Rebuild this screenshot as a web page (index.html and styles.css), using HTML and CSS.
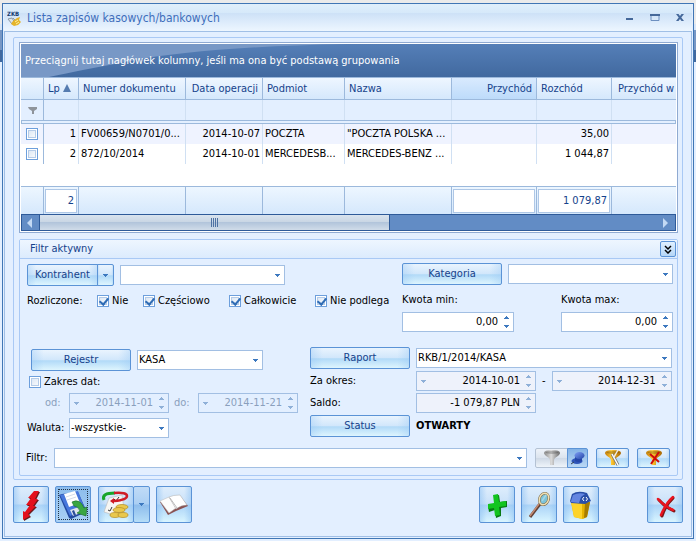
FILE: index.html
```html
<!DOCTYPE html>
<html lang="pl">
<head>
    <meta charset="utf-8">
    <title>Lista zapisów kasowych/bankowych</title>
    <link rel="stylesheet" href="styles.css">
</head>
<body>
    <svg class="defs" width="0" height="0">
        <defs>
            <linearGradient id="gold" x1="0" x2="1"><stop offset="0" stop-color="#c07a08"/><stop offset=".4" stop-color="#ffc933"/><stop offset="1" stop-color="#a86400"/></linearGradient>
            <linearGradient id="steel" x1="0" x2="1"><stop offset="0" stop-color="#8b8b8b"/><stop offset=".45" stop-color="#dcdcdc"/><stop offset="1" stop-color="#6d6d6d"/></linearGradient>
            <linearGradient id="blue" x1="0" x2="1" y2="1"><stop offset="0" stop-color="#7f9ff5"/><stop offset="1" stop-color="#2446a8"/></linearGradient>
        </defs>
        <symbol id="drop" viewBox="0 0 5 3"><path d="M0 0h5v1H4v1H3v1H2V2H1V1H0z" fill="currentColor"/></symbol>
        <symbol id="updown" viewBox="0 0 5 12"><path d="M2 0h1v1h1v1h1v1H0V2h1V1h1zM0 9h5v1H4v1H3v1H2v-1H1v-1H0z" fill="currentColor"/></symbol>
        <symbol id="funnel" viewBox="0 0 18 18"><path d="M1 4q0-3 8-3t8 3q0 2-5 5-1 1-1 3v4H7v-4q0-2-1-3-5-3-5-5z"/><ellipse cx="9" cy="3.500" rx="6.500" ry="1.500" fill="#0003"/></symbol>
    </svg>

    <div class="window">
        <header class="titlebar">
            <svg class="app-icon" width="15" height="16" viewBox="0 0 15 16">
                <text x="0" y="6" font-size="6" font-weight="bold" fill="#173c70">ZKB</text>
                <path d="M1 9l4 5 3-1-3-5zM6 8l2 2" stroke="#8b99a6" fill="#dde3e8"/>
                <path d="M6 11l4-3 3-1-1 3 2 2-3 3-4 1-3-2z" fill="#e5b429"/>
                <path d="M8 12l3-2M9 14l3-2" stroke="#fff0a0"/>
            </svg>
            <h1>Lista zapisów kasowych/bankowych</h1>
            <button class="sys" aria-label="Minimalizuj"><svg width="10" height="9"><path d="M1 5h7v2H1z" fill="#45689a"/></svg></button>
            <button class="sys" aria-label="Maksymalizuj"><svg width="10" height="9"><path d="M1 1.500h8v6H1z" fill="none" stroke="#6d8fc0"/><path d="M0 1h10v2H0z" fill="#45689a"/></svg></button>
            <button class="sys" aria-label="Zamknij"><svg width="10" height="9"><path d="M1 1h2.500L5 3l1.500-2H9L6.300 4.500 9 8H6.500L5 6 3.500 8H1l2.700-3.500z" fill="#45689a"/></svg></button>
        </header>

        <main class="content">
            <div class="panel">
                <div class="grid">
                    <div class="group-bar">
                        <svg width="326" height="33" viewBox="0 0 326 33"><path d="M0 0H326Q180 3 110 17 60 26 28 33H0z" fill="#7898c6"/></svg>
                        <span>Przeciągnij tutaj nagłówek kolumny, jeśli ma ona być podstawą grupowania</span>
                    </div>
                    <table>
                        <colgroup>
                            <col class="c-mark"><col class="c-lp"><col class="c-doc"><col class="c-date"><col class="c-party"><col class="c-name"><col class="c-in"><col class="c-out"><col>
                        </colgroup>
                        <thead>
                            <tr class="head">
                                <th></th>
                                <th>Lp <svg width="8" height="8"><path d="M4 0l4 8H0z" fill="#557cb0"/></svg></th>
                                <th>Numer dokumentu</th>
                                <th class="num">Data operacji</th>
                                <th>Podmiot</th>
                                <th>Nazwa</th>
                                <th class="num hot">Przychód</th>
                                <th>Rozchód</th>
                                <th class="wide">Przychód w</th>
                            </tr>
                            <tr class="filter-row">
                                <td><svg width="9" height="9"><path d="M0 1h9v2L6 5v3H4V5L1 3z" fill="#8f949b"/></svg></td>
                                <td></td><td></td><td></td><td></td><td></td><td></td><td></td><td></td>
                            </tr>
                            <tr class="rule"><td colspan="9"></td></tr>
                        </thead>
                        <tbody>
                            <tr>
                                <td><input type="checkbox" aria-label="Zaznacz 1"></td>
                                <td class="num">1</td>
                                <td>FV00659/N0701/0...</td>
                                <td class="num">2014-10-07</td>
                                <td>POCZTA</td>
                                <td>"POCZTA POLSKA ...</td>
                                <td></td>
                                <td class="num">35,00</td>
                                <td></td>
                            </tr>
                            <tr>
                                <td><input type="checkbox" aria-label="Zaznacz 2"></td>
                                <td class="num">2</td>
                                <td>872/10/2014</td>
                                <td class="num">2014-10-01</td>
                                <td>MERCEDESB...</td>
                                <td>MERCEDES-BENZ ...</td>
                                <td></td>
                                <td class="num">1 044,87</td>
                                <td></td>
                            </tr>
                            <tr class="empty"><td colspan="9"></td></tr>
                        </tbody>
                        <tfoot>
                            <tr>
                                <td></td>
                                <td><div class="sum">2</div></td>
                                <td></td><td></td><td></td><td></td>
                                <td><div class="sum"></div></td>
                                <td><div class="sum">1 079,87</div></td>
                                <td></td>
                            </tr>
                        </tfoot>
                    </table>
                    <div class="scroll">
                        <button class="scroll-end" aria-label="W lewo"><svg width="5" height="10"><path d="M5 0v10L0 5z" fill="#c3d9f4"/></svg></button>
                        <div class="thumb"><i></i><i></i><i></i><i></i></div>
                        <button class="scroll-end" aria-label="W prawo"><svg width="5" height="10"><path d="M0 0v10l5-5z" fill="#c3d9f4"/></svg></button>
                    </div>
                </div>

                <section class="filter">
                    <header class="filter-head">
                        <h2>Filtr aktywny</h2>
                        <button class="collapse" aria-label="Zwiń"><svg width="8" height="9"><path d="M1 1l3 3 3-3M1 5l3 3 3-3" fill="none" stroke="#000" stroke-width="1.500"/></svg></button>
                    </header>

                    <form>
                        <div class="upper">
                            <div class="upper-left">
                                <div class="row">
                                    <div class="split">
                                        <button type="button" class="btn">Kontrahent</button>
                                        <button type="button" class="btn arrow" aria-label="Rozwiń"><svg width="5" height="3"><use href="#drop"/></svg></button>
                                    </div>
                                    <div class="combo w-combo"><select aria-label="Kontrahent"><option></option></select><svg width="5" height="3"><use href="#drop"/></svg></div>
                                </div>
                                <div class="row checks">
                                    <span class="checks-title">Rozliczone:</span>
                                    <label class="short"><input type="checkbox" checked>Nie</label>
                                    <label><input type="checkbox" checked>Częściowo</label>
                                    <label><input type="checkbox" checked>Całkowicie</label>
                                    <label><input type="checkbox" checked>Nie podlega</label>
                                </div>
                            </div>
                            <div class="upper-right">
                                <div class="row">
                                    <button type="button" class="btn big">Kategoria</button>
                                    <div class="combo w-combo"><select aria-label="Kategoria"><option></option></select><svg width="5" height="3"><use href="#drop"/></svg></div>
                                </div>
                                <div class="row amounts">
                                    <div class="amount">
                                        <label for="min">Kwota min:</label>
                                        <div class="spin"><input id="min" type="text" value="0,00"><svg width="5" height="12"><use href="#updown"/></svg></div>
                                    </div>
                                    <div class="amount">
                                        <label for="max">Kwota max:</label>
                                        <div class="spin"><input id="max" type="text" value="0,00"><svg width="5" height="12"><use href="#updown"/></svg></div>
                                    </div>
                                </div>
                            </div>
                        </div>

                        <div class="lower">
                            <div class="lower-left">
                                <div class="row register">
                                    <button type="button" class="btn big">Rejestr</button>
                                    <div class="combo w-register"><select aria-label="Rejestr"><option>KASA</option></select><svg width="5" height="3"><use href="#drop"/></svg></div>
                                </div>
                                <label class="range"><input type="checkbox">Zakres dat:</label>
                                <div class="row dates">
                                    <label for="from">od:</label>
                                    <div class="spin off w-date"><svg width="5" height="3"><use href="#drop"/></svg><input id="from" type="text" value="2014-11-01" disabled><svg width="5" height="12"><use href="#updown"/></svg></div>
                                    <label for="to">do:</label>
                                    <div class="spin off w-date"><svg width="5" height="3"><use href="#drop"/></svg><input id="to" type="text" value="2014-11-21" disabled><svg width="5" height="12"><use href="#updown"/></svg></div>
                                </div>
                                <div class="row currency">
                                    <label for="currency">Waluta:</label>
                                    <div class="combo w-date"><select id="currency"><option>-wszystkie-</option></select><svg width="5" height="3"><use href="#drop"/></svg></div>
                                </div>
                            </div>
                            <div class="lower-right">
                                <button type="button" class="btn big">Raport</button>
                                <div class="combo"><select aria-label="Raport"><option>RKB/1/2014/KASA</option></select><svg width="5" height="3"><use href="#drop"/></svg></div>
                                <label for="period">Za okres:</label>
                                <div class="row period">
                                    <div class="spin read"><svg width="5" height="3"><use href="#drop"/></svg><input id="period" type="text" value="2014-10-01" readonly><svg width="5" height="12"><use href="#updown"/></svg></div>
                                    <span>-</span>
                                    <div class="spin read"><svg width="5" height="3"><use href="#drop"/></svg><input aria-label="Do" type="text" value="2014-12-31" readonly><svg width="5" height="12"><use href="#updown"/></svg></div>
                                </div>
                                <label for="balance">Saldo:</label>
                                <div class="spin read"><input id="balance" type="text" value="-1 079,87 PLN" readonly><svg width="5" height="12"><use href="#updown"/></svg></div>
                                <button type="button" class="btn big">Status</button>
                                <strong>OTWARTY</strong>
                            </div>
                        </div>

                        <div class="row query">
                            <label for="query">Filtr:</label>
                            <div class="combo"><select id="query"><option></option></select><svg width="5" height="3"><use href="#drop"/></svg></div>
                            <div class="split">
                                <button type="button" class="btn icon dull" aria-label="Filtruj"><svg width="18" height="18"><use href="#funnel" fill="url(#steel)"/></svg></button>
                                <button type="button" class="btn icon pin" aria-label="Przypnij"><svg width="14" height="14"><ellipse cx="6" cy="10" rx="5.500" ry="3" fill="#2e55b8"/><path d="M4 5h7v5q-3 2-7 0z" fill="#2446a8"/><ellipse cx="8.500" cy="4.500" rx="5" ry="3.500" fill="url(#blue)"/><path d="M0 13l3-2" stroke="#345"/></svg></button>
                            </div>
                            <button type="button" class="btn icon" aria-label="Edytuj filtr"><svg width="18" height="18"><use href="#funnel" fill="url(#gold)"/><path d="M8 5l6 11" stroke="#777" stroke-width="3"/><path d="M8 5l6 11" stroke="#fff" stroke-width="1.500"/><path d="M14 1l-4 7" stroke="#eee" stroke-width="1.500"/></svg></button>
                            <button type="button" class="btn icon" aria-label="Usuń filtr"><svg width="18" height="18"><use href="#funnel" fill="url(#gold)"/><path d="M5 5l9 8M14 3L6 15" stroke="#cf0a0a" stroke-width="2"/></svg></button>
                        </div>
                    </form>
                </section>
            </div>

            <div class="toolbar">
                <button class="tool" aria-label="Wykonaj"><svg width="32" height="32"><path d="M20 3h5l-4 8 3 0-5 7 3 0-8 8 2 2-7 4 0-9 2 1 5-7h-4l5-7h-3z" fill="#6a1a1a"/><path d="M19 2h5l-4 8 3 0-5 7 3 0-8 8 2 2-7 4 0-9 2 1 5-7h-4l5-7h-3z" fill="#e3101c"/></svg></button>
                <button class="tool save" aria-label="Zapisz"><svg width="32" height="32"><path d="M2 6l3-1 16-2 8 18-2 3-13 6-2-1z" fill="#244aa0"/><path d="M3 6l18-4 7 18-15 7z" fill="#4777dc"/><path d="M7 5l11-3 5 12-11 4z" fill="#fff"/><path d="M9 8l9-3M10 11l9-3" stroke="#d5dcea"/><path d="M13 21l9-3 4 5-10 4z" fill="#dfe5ee"/><path d="M15 22l2-1 2 5-2 1z" fill="#2c4d99"/><path d="M15 13q8-4 12 6l3-1-1 9-9-3 3-2q-2-5-6-5z" fill="#3aa642" stroke="#186d25" stroke-width=".6"/></svg></button>
                <div class="split">
                    <button class="tool" aria-label="Rozlicz"><svg width="32" height="32"><path d="M9 9l13-3 2 14-10 6-10-3z" fill="#f7f7f4" stroke="#bbb" stroke-width=".6"/><path d="M14 10l2 2 3-4M8 21l2 1 2-4" fill="none" stroke="#333"/><path d="M4 11q-3-7 11-7" fill="none" stroke="#18a52b" stroke-width="3"/><path d="M14 4q13-1 13 3 0 4-13 5" fill="none" stroke="#cf1d26" stroke-width="2.500"/><path d="M14 9v6l-4-3z" fill="#cf1d26"/><g fill="#e9c84d" stroke="#b58b20" stroke-width=".7"><ellipse cx="22" cy="18" rx="6" ry="2.500"/><ellipse cx="19" cy="21" rx="6" ry="2.500"/><ellipse cx="15" cy="26" rx="5" ry="2.500"/><ellipse cx="23" cy="26" rx="5" ry="2.500"/></g></svg></button>
                    <button class="tool narrow" aria-label="Rozwiń"><svg width="5" height="3"><use href="#drop"/></svg></button>
                </div>
                <button class="tool" aria-label="Książka"><svg width="32" height="32"><path d="M2 13l8 13 8-4 12-5-8-10z" fill="#8a5252"/><path d="M2 12l9-4 7 11-7 5z" fill="#fcfcfc" stroke="#b9b9b9" stroke-width=".5"/><path d="M11 8q4-2 11-2l7 10q-6 0-11 4z" fill="#fff" stroke="#aaa" stroke-width=".5"/><path d="M12 9l7 10" stroke="#bbb"/></svg></button>
                <div class="gap"></div>
                <button class="tool" aria-label="Dodaj"><svg width="32" height="32"><path d="M13 7l5-1 1 7 7-1v6l-6 1v8l-5 2-1-8-6 2-1-6 7-2z" fill="#087a13"/><path d="M12 6l5-1 1 8 7-1v5l-7 1 1 8-5 1-1-8-6 1v-5l6-1z" fill="#12c41f"/></svg></button>
                <button class="tool" aria-label="Szukaj"><svg width="32" height="32"><path d="M7 28L17 15" stroke="#614035" stroke-width="3"/><path d="M7 27L16 15" stroke="#c58b72" stroke-width="1.500"/><ellipse cx="21" cy="10" rx="4.500" ry="6" transform="rotate(22 21 10)" fill="#7cc3da" stroke="#7b6845" stroke-width="2.500"/><ellipse cx="21" cy="10" rx="4.500" ry="6" transform="rotate(22 21 10)" fill="none" stroke="#efe0b4" stroke-width="1.500"/><path d="M19 12l4-6" stroke="#a6d7e3" stroke-width="1.500"/></svg></button>
                <button class="tool" aria-label="Usuń"><svg width="32" height="32"><path d="M6 13h19l-3 15-4 2-9-2z" fill="#e6b300"/><path d="M6 13l11 2v15l-8-2z" fill="#fcd32a"/><path d="M20 14l5-1-3 15-3 1z" fill="#a67c00"/><path d="M5 12l2-7q6-4 15-1l4 8-6 3-14-1z" fill="#294fa8"/><path d="M6 12l2-6q6-3 12-1l-4 3-2 6-8-1z" fill="#6385e0"/><path d="M19 8q-3 2 0 4M21 8q3 2 0 4" fill="none" stroke="#fff"/></svg></button>
                <button class="tool close" aria-label="Zamknij okno"><svg width="32" height="32"><path d="M10 11q6 7 15 11M24 9q-7 6-11 18" fill="none" stroke="#7d1717" stroke-width="3" stroke-linecap="round"/><path d="M9 10q6 7 15 11M24 8q-7 6-12 18" fill="none" stroke="#ea1420" stroke-width="2.500" stroke-linecap="round"/></svg></button>
            </div>
        </main>
    </div>
</body>
</html>
```
FILE: styles.css
```css
* {
    box-sizing: border-box;
}
body {
    margin: 0;
    min-height: 100vh;
    padding: 3px 2px 2px;
    display: flex;
    font: 11px/14px "DejaVu Sans Condensed", "Open Sans", sans-serif;
    color: #000;
    background: linear-gradient(#ebebeb 0 24px, #d8e6f8 24px 30px, #7797c5 30px 50px, #41699f 50px 62px, #e3efff 62px);
}
h1, h2 {
    margin: 0;
    font-weight: normal;
}
button, input, select {
    font: inherit;
    color: inherit;
    margin: 0;
    padding: 0;
}
button svg {
    display: block;
}
.defs {
    position: absolute;
}

/* window */
.window {
    flex: 1;
    min-width: 0;
    display: flex;
    flex-direction: column;
    border: 1px solid #4076b5;
    padding: 0 1px 1px;
    background: #e3efff;
}
.titlebar {
    display: flex;
    align-items: center;
    height: 27px;
    padding: 0 7px 0 3px;
    background: linear-gradient(#e0effb, #d6e9fa 9px, #cde1f7 9px, #edf6ff);
}
.titlebar h1 {
    flex: 1;
    margin-left: 5px;
    font-size: 12px;
    line-height: 18px;
    color: #3e6ebb;
}
.sys {
    border: 0;
    background: none;
    width: 10px;
    margin-left: 15px;
}
.content {
    flex: 1;
    display: flex;
    flex-direction: column;
    border: 1px solid #a0bfe6;
    padding: 5px 8px;
}
.panel {
    border: 1px solid #a9c9f5;
    border-radius: 2px;
    padding: 4px 4px 3px 5px;
}

/* grid */
.grid {
    border: 1px solid #8faad2;
    padding: 1px;
    background: #fff;
}
.group-bar {
    position: relative;
    height: 33px;
    padding: 10px 4px;
    color: #fff;
    background: linear-gradient(#557fb8, #41699f);
}
.group-bar svg {
    position: absolute;
    top: 0;
    left: 0;
}
.group-bar span {
    position: relative;
}
table {
    width: 100%;
    table-layout: fixed;
    border-collapse: separate;
    border-spacing: 0;
}
.c-mark { width: 23px; }
.c-lp { width: 35px; }
.c-doc { width: 107px; }
.c-date { width: 77px; }
.c-party { width: 82px; }
.c-name { width: 107px; }
.c-in { width: 85px; }
.c-out { width: 75px; }
th, td {
    padding: 0 2px;
    overflow: hidden;
    white-space: nowrap;
    text-align: left;
    font-weight: normal;
    border-right: 1px solid #d0e0f3;
}
.num {
    text-align: right;
}
.head th {
    height: 23px;
    padding: 0 4px;
    color: #15428b;
    background: linear-gradient(#eef6ff, #d5e8fc);
    border: 1px solid #9cb9dc;
    border-left: 0;
}
.head .hot {
    background: linear-gradient(#d9eafe, #bddbfa);
}
.head .wide {
    padding: 0 0 0 6px;
}
.head th:last-child, td:last-child {
    border-right: 0;
}
.filter-row td {
    height: 20px;
    background: #e3efff;
}
td:first-child {
    text-align: center;
    border-right-color: #9cb9dc;
}
td svg, td input {
    vertical-align: middle;
}
.rule td {
    height: 4px;
    border: 1px solid #9cb9dc;
    background: #e3efff;
}
tbody td {
    height: 20px;
}
tbody tr:first-child td {
    background: #eff3ff;
}
.empty td {
    height: 22px;
    border: 0;
}
tfoot td {
    height: 28px;
    padding: 1px;
    color: #15428b;
    background: linear-gradient(#edf6ff, #d5e8fc);
    border-top: 1px solid #9cb9dc;
    border-right-color: #9cb9dc;
}
.sum {
    height: 24px;
    padding: 4px 2px;
    text-align: right;
    background: #fff;
    border: 1px solid #aec7e6;
}
.scroll {
    display: flex;
    height: 17px;
    border: 1px solid #2e5a99;
    background: #628cc5;
}
.scroll-end {
    width: 17px;
    padding-left: 5px;
    border: 0;
    background: none;
}
.scroll-end:last-child {
    margin-left: auto;
}
.thumb {
    width: 351px;
    display: flex;
    align-items: center;
    justify-content: center;
    gap: 1px;
    border-right: 1px solid #2e5a99;
    border-left: 1px solid #2e5a99;
    background: linear-gradient(#d9e3ee, #c9d6e4 7px, #b0c3da 7px, #d0dce9);
}
.thumb i {
    width: 1px;
    height: 9px;
    background: #4d71a3;
}

/* filter panel */
.filter {
    margin-top: 6px;
    border: 1px solid #a9c9f5;
    border-radius: 2px;
}
.filter-head {
    display: flex;
    justify-content: space-between;
    align-items: center;
    height: 19px;
    padding: 0 1px 0 10px;
    background: linear-gradient(#eef6ff, #dcebfd);
    border-bottom: 1px solid #a9c9f5;
}
.filter-head h2 {
    font-size: 11px;
    color: #15428b;
}
.collapse {
    width: 16px;
    height: 16px;
    padding: 0 3px;
    border: 1px solid #5b93d6;
    border-radius: 2px;
    background: linear-gradient(#e0f0ff, #b5d6f7);
}
form {
    padding: 4px 4px 7px 6px;
}
.row {
    display: flex;
    align-items: center;
    gap: 6px;
}
.btn {
    height: 22px;
    color: #15428b;
    border: 1px solid #5b93d6;
    border-radius: 2px;
    background: linear-gradient(90deg, #9ccaf566, #fff0 12%, #fff0 88%, #9ccaf566), linear-gradient(#eaf4fe, #d2e7fb 48%, #b2daf8 54%, #def5fe);
}
.btn.big {
    width: 100px;
}
.split {
    display: flex;
}
.split .btn:first-child {
    width: 71px;
    border-radius: 2px 0 0 2px;
}
.split .btn + .btn {
    margin-left: -1px;
    border-radius: 0 2px 2px 0;
}
.btn.arrow {
    width: 17px;
    padding-left: 5px;
}
.arrow svg, .combo svg, .spin svg, .narrow svg {
    color: #3c78bf;
}
.combo, .spin {
    position: relative;
    display: flex;
    align-items: center;
    height: 20px;
    border: 1px solid #a2bfe3;
    background: #fff;
}
.combo select {
    appearance: none;
    width: 100%;
    height: 18px;
    padding: 0 14px 0 1px;
    border: 0;
    background: none;
}
.combo svg {
    position: absolute;
    right: 4px;
    pointer-events: none;
}
.spin {
    padding: 0 4px;
}
.spin input {
    flex: 1;
    min-width: 0;
    padding-right: 6px;
    border: 0;
    text-align: right;
    background: none;
}
.spin.off, .spin.read {
    background: #e3efff;
}
.spin.read {
    background: #eef2fb;
}
.off, .off input {
    color: #8a9fbd;
}
.spin.off svg, .spin.read svg {
    color: #8fb0d8;
}
.w-combo { width: 165px; }
.w-register { width: 126px; }
.w-date { width: 100px; }

input[type="checkbox"] {
    appearance: none;
    flex: none;
    width: 12px;
    height: 12px;
    border: 1px solid #6d9fdc;
    background: linear-gradient(135deg, #d5e2f2, #fff);
    box-shadow: inset 0 0 0 1px #fff, inset 0 0 0 2px #b4cbe8;
}
input[type="checkbox"]:checked::before {
    content: "";
    display: block;
    width: 4px;
    height: 7px;
    margin: 0 3px;
    border: solid #2f6cb5;
    border-width: 0 2px 2px 0;
    transform: rotate(40deg);
}
.upper {
    display: flex;
    justify-content: space-between;
    height: 84px;
}
.upper-left {
    padding: 1px 0 0 1px;
}
.checks {
    gap: 0;
    height: 30px;
}
.checks-title {
    width: 70px;
}
.checks label {
    display: flex;
    align-items: center;
    gap: 3px;
    width: 86px;
    white-space: nowrap;
}
.checks .short {
    width: 46px;
}
.amounts {
    justify-content: space-between;
    margin-top: 8px;
}
.amount {
    width: 112px;
}
.amount .spin {
    margin-top: 5px;
}

.lower {
    display: flex;
    gap: 12px;
    padding-right: 3px;
}
.lower-left {
    flex: none;
    width: 272px;
    padding-top: 2px;
}
.register {
    padding-left: 5px;
}
.range {
    display: flex;
    align-items: center;
    gap: 3px;
    height: 22px;
    padding-left: 3px;
}
.dates label {
    width: 18px;
    color: #8a9fbd;
}
.dates {
    gap: 5px;
    padding-left: 19px;
}
.dates label + .spin {
    margin-left: 1px;
}
.currency {
    gap: 0;
    margin-top: 5px;
}
.currency label {
    width: 43px;
    padding-left: 1px;
    white-space: nowrap;
}
.lower-right {
    flex: 1;
    display: grid;
    grid-template-columns: 100px 1fr;
    gap: 2px 6px;
    align-content: start;
    align-items: center;
}
.period {
    justify-content: space-between;
}
.read {
    width: 120px;
}
.query {
    margin-top: 10px;
    gap: 8px;
    padding-right: 3px;
}
.query > label {
    width: 20px;
    white-space: nowrap;
}
.query .combo {
    flex: 1;
}
.query .btn, .query .split .btn {
    display: flex;
    align-items: center;
    justify-content: center;
    width: 33px;
    height: 20px;
}
.query .split .pin {
    width: 21px;
    background: linear-gradient(#83b2e6, #bad8f5);
}
.btn.dull {
    border-color: #b4c2d4;
    background: linear-gradient(#edf2f9, #dce4ee 48%, #cfd9e6 52%, #eef4fa);
}

/* toolbar */
.toolbar {
    display: flex;
    gap: 6px;
    margin-top: 6px;
}
.toolbar .gap {
    flex: 1;
}
.tool {
    width: 36px;
    height: 37px;
    padding: 0 1px;
    border: 1px solid #5b93d6;
    border-radius: 2px;
    background: linear-gradient(90deg, #8fc2f388, #fff0 20%, #fff0 80%, #8fc2f388), linear-gradient(#deedfc, #c9e1f9 48%, #abd3f7 52%, #d9f5ff);
}
.tool.save {
    margin-right: 1px;
    outline: 1px dotted #234;
    outline-offset: -4px;
    background: linear-gradient(#8cbcec, #a9d0f5);
}
.tool.narrow {
    width: 17px;
    margin-left: -1px;
    padding-left: 5px;
    background: linear-gradient(#c0dbf7, #abcff3 48%, #8ebdec 52%, #b5ddf8);
}
.tool.close {
    margin-left: 42px;
}
```
